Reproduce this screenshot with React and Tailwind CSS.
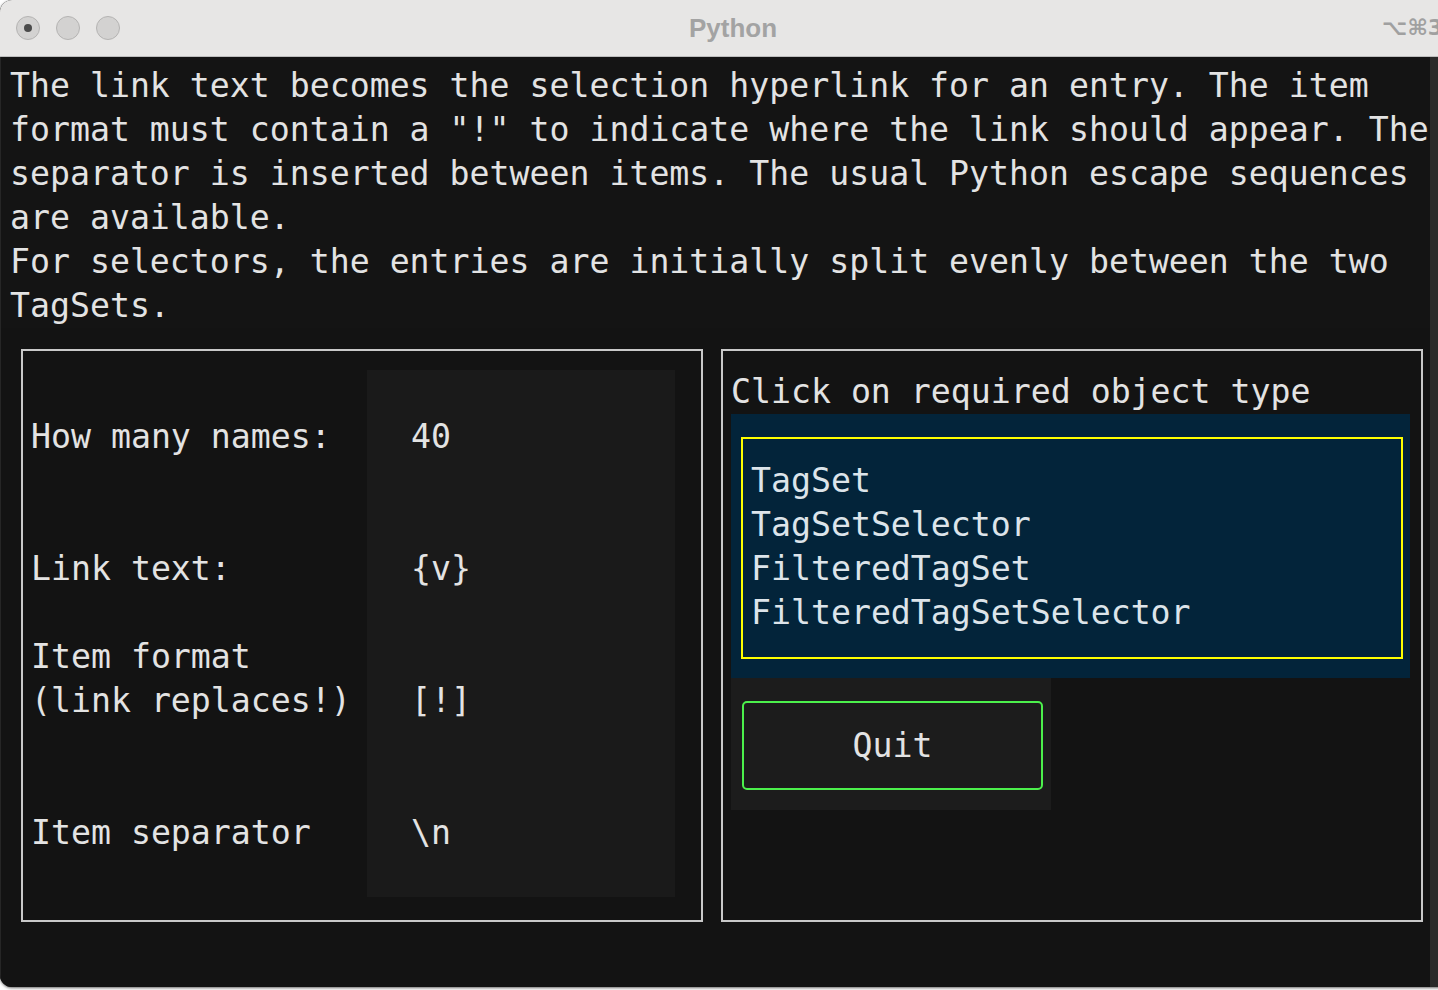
import React from 'react';

const mono = "font-['DejaVu_Sans_Mono','Liberation_Mono',monospace]";

const introLines = [
  'The link text becomes the selection hyperlink for an entry. The item',
  'format must contain a "!" to indicate where the link should appear. The',
  'separator is inserted between items. The usual Python escape sequences',
  'are available.',
  'For selectors, the entries are initially split evenly between the two',
  'TagSets.',
];

const objectTypes = ['TagSet', 'TagSetSelector', 'FilteredTagSet', 'FilteredTagSetSelector'];

function TitleBar() {
  return (
    <div className="h-[57px] shrink-0 bg-[#e7e6e5] border-b border-[#bdbdbd] grid grid-cols-[1fr_auto_1fr] items-center">
      <div className="flex items-center gap-[16px] pl-[16px]">
        <div className="w-[24px] h-[24px] rounded-full bg-[#d3d2d1] border border-[#b5b4b3] flex items-center justify-center">
          <div className="w-[8px] h-[8px] rounded-full bg-[#4b4b4b]" />
        </div>
        <div className="w-[24px] h-[24px] rounded-full bg-[#d3d2d1] border border-[#b5b4b3]" />
        <div className="w-[24px] h-[24px] rounded-full bg-[#d3d2d1] border border-[#b5b4b3]" />
      </div>
      <div className="font-['Liberation_Sans',Arial,sans-serif] font-bold text-[26px] text-[#a3a3a3] leading-none">
        Python
      </div>
      <div className="pl-[605px] font-['DejaVu_Sans',sans-serif] font-bold text-[22px] text-[#a0a0a0] leading-none whitespace-nowrap">
        ⌥⌘3
      </div>
    </div>
  );
}

function OptionsPanel() {
  const rows = [
    { h: 'h-[125px]', lpt: 'pt-[45px]', vpt: 'pt-[45px]', label: ['How many names:'], value: '40' },
    { h: 'h-[133px]', lpt: 'pt-[52px]', vpt: 'pt-[52px]', label: ['Link text:'], value: '{v}' },
    { h: 'h-[122px]', lpt: 'pt-[7px]', vpt: 'pt-[51px]', label: ['Item format', '(link replaces!)'], value: '[!]' },
    { h: 'h-[147px]', lpt: 'pt-[61px]', vpt: 'pt-[61px]', label: ['Item separator'], value: '\\n' },
  ];
  return (
    <div className="w-[682px] h-[573px] border-2 border-[#c9c9c9] pt-[19px]">
      <div className="grid grid-cols-[344px_308px]">
        {rows.map((r, i) => (
          <React.Fragment key={i}>
            <div className={`${r.h} ${r.lpt} pl-[8px]`}>
              {r.label.map((t) => (
                <div key={t} className="whitespace-pre">{t}</div>
              ))}
            </div>
            <div className={`${r.h} ${r.vpt} pl-[44px] bg-[#1a1a1a]`}>
              <div className="whitespace-pre">{r.value}</div>
            </div>
          </React.Fragment>
        ))}
      </div>
    </div>
  );
}

function ChooserPanel() {
  return (
    <div className="w-[702px] h-[573px] border-2 border-[#c9c9c9] pt-[19px] pl-[8px]">
      <div className="whitespace-pre">Click on required object type</div>
      <div className="w-[679px] bg-[#03243a] pt-[23px] pl-[10px] pb-[19px]">
        <div className="w-[662px] border-2 border-[#ffff00] pt-[20px] pb-[22px] pl-[8px] text-[#dde4ea]">
          {objectTypes.map((t) => (
            <div key={t} className="whitespace-pre cursor-pointer">{t}</div>
          ))}
        </div>
      </div>
      <div className="w-[320px] h-[132px] bg-[#1c1c1c] pt-[23px] pl-[11px]">
        <button className="w-[301px] h-[89px] border-2 border-[#4cf04c] rounded-[5px] bg-[#1c1c1c] text-[#e3e3e3] flex items-center justify-center leading-[44px]">
          Quit
        </button>
      </div>
    </div>
  );
}

export default function App() {
  return (
    <div className="w-[1438px] h-[990px] bg-[#ffffff] overflow-hidden">
      <div className="w-[1466px] h-[987px] rounded-[12px] overflow-hidden flex flex-col bg-[#131313] shadow-[0_1px_3px_rgba(0,0,0,0.6)]">
        <TitleBar />
        <div className={`flex flex-1 ${mono} text-[33.2px] leading-[44px] text-[#e3e3e3]`}>
          <div className="w-[1430px] flex flex-col bg-[#131313] border-l border-[#262626]">
            <div className="pl-[9px] pt-[7px] bg-[#141414]">
              {introLines.map((l) => (
                <div key={l} className="whitespace-pre">{l}</div>
              ))}
            </div>
            <div className="flex gap-[18px] pl-[20px] mt-[21px]">
              <OptionsPanel />
              <ChooserPanel />
            </div>
          </div>
          <div className="flex-1 bg-[#2a2a2a]" />
        </div>
      </div>
    </div>
  );
}
